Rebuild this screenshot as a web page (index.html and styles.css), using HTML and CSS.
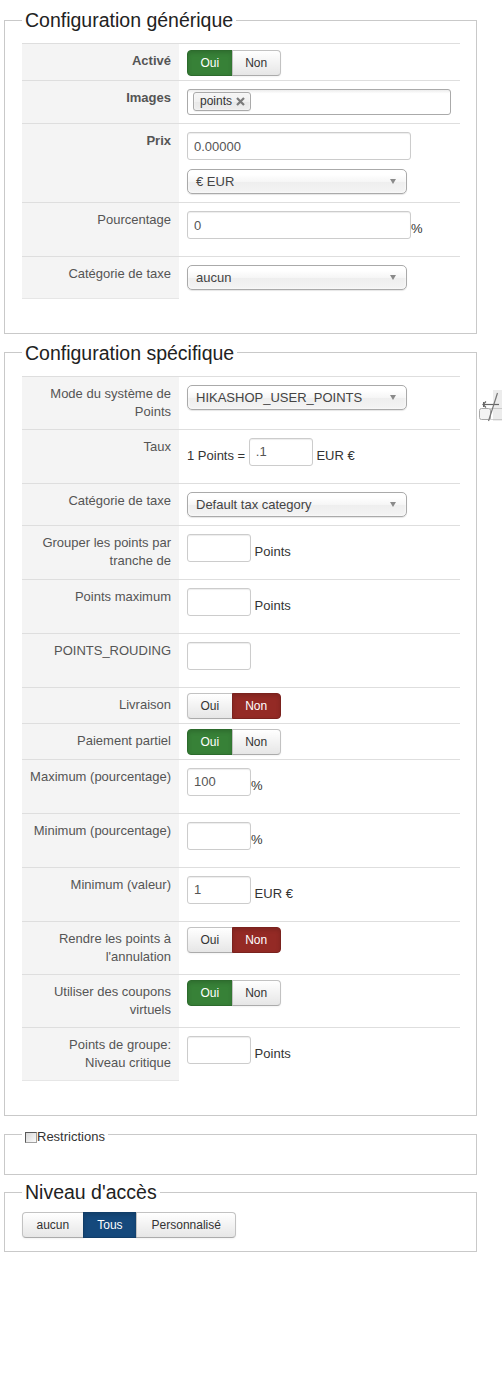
FILE: index.html
```html
<!DOCTYPE html>
<html lang="fr">
<head>
<meta charset="utf-8">
<title>Configuration</title>
<link rel="stylesheet" href="styles.css">
</head>
<body>
<div class="page">

<fieldset class="panel">
  <legend>Configuration générique</legend>
  <table class="form sec1">
    <tr>
      <td class="key strong">Activé</td>
      <td class="val"><div class="toggle"><span class="btn green">Oui</span><span class="btn">Non</span></div></td>
    </tr>
    <tr>
      <td class="key strong">Images</td>
      <td class="val"><div class="multi"><span class="tag">points<svg class="x" width="9" height="9" viewBox="0 0 9 9"><path d="M1 1L8 8M8 1L1 8" stroke="#7a7a7a" stroke-width="2.2"/></svg></span></div></td>
    </tr>
    <tr>
      <td class="key strong">Prix</td>
      <td class="val"><input class="inp" type="text" value="0.00000"><div class="sel">€ EUR</div></td>
    </tr>
    <tr>
      <td class="key">Pourcentage</td>
      <td class="val"><input class="inp" type="text" value="0">%</td>
    </tr>
    <tr class="last">
      <td class="key">Catégorie de taxe</td>
      <td class="val"><div class="sel">aucun</div></td>
    </tr>
  </table>
</fieldset>

<fieldset class="panel">
  <legend>Configuration spécifique</legend>
  <table class="form">
    <tr>
      <td class="key">Mode du système de<br>Points</td>
      <td class="val"><div class="sel">HIKASHOP_USER_POINTS</div></td>
    </tr>
    <tr>
      <td class="key">Taux</td>
      <td class="val">1 Points = <input class="inp sm" type="text" value=".1"> EUR €</td>
    </tr>
    <tr>
      <td class="key">Catégorie de taxe</td>
      <td class="val"><div class="sel">Default tax category</div></td>
    </tr>
    <tr>
      <td class="key">Grouper les points par<br>tranche de</td>
      <td class="val"><input class="inp sm" type="text" value=""> Points</td>
    </tr>
    <tr>
      <td class="key">Points maximum</td>
      <td class="val"><input class="inp sm" type="text" value=""> Points</td>
    </tr>
    <tr>
      <td class="key">POINTS_ROUDING</td>
      <td class="val"><input class="inp sm" type="text" value=""></td>
    </tr>
    <tr>
      <td class="key">Livraison</td>
      <td class="val"><div class="toggle"><span class="btn">Oui</span><span class="btn red">Non</span></div></td>
    </tr>
    <tr>
      <td class="key">Paiement partiel</td>
      <td class="val"><div class="toggle"><span class="btn green">Oui</span><span class="btn">Non</span></div></td>
    </tr>
    <tr>
      <td class="key">Maximum (pourcentage)</td>
      <td class="val"><input class="inp sm" type="text" value="100">%</td>
    </tr>
    <tr>
      <td class="key">Minimum (pourcentage)</td>
      <td class="val"><input class="inp sm" type="text" value="">%</td>
    </tr>
    <tr>
      <td class="key">Minimum (valeur)</td>
      <td class="val"><input class="inp sm" type="text" value="1"> EUR €</td>
    </tr>
    <tr>
      <td class="key">Rendre les points à<br>l'annulation</td>
      <td class="val"><div class="toggle"><span class="btn">Oui</span><span class="btn red">Non</span></div></td>
    </tr>
    <tr>
      <td class="key">Utiliser des coupons<br>virtuels</td>
      <td class="val"><div class="toggle"><span class="btn green">Oui</span><span class="btn">Non</span></div></td>
    </tr>
    <tr class="last">
      <td class="key">Points de groupe:<br>Niveau critique</td>
      <td class="val"><input class="inp sm" type="text" value=""> Points</td>
    </tr>
  </table>
</fieldset>

<fieldset class="panel restr">
  <legend><input class="chk" type="checkbox"><span class="restr-label">Restrictions</span></legend>
</fieldset>

<fieldset class="panel access">
  <legend>Niveau d'accès</legend>
  <div class="toggle group"><span class="btn">aucun</span><span class="btn blue">Tous</span><span class="btn wide">Personnalisé</span></div>
</fieldset>

<svg class="resize-icon" width="24" height="32" viewBox="0 0 24 32">
  <rect x="15" y="0" width="9" height="31" fill="#ececec"/>
  <rect x="1.5" y="18.5" width="11" height="11" rx="2" fill="#f4f4f4" stroke="#a8a8a8"/>
  <rect x="12.5" y="18.5" width="12" height="11" fill="none" stroke="#a8a8a8" stroke-dasharray="1 1"/>
  <path d="M5 14.5H21" stroke="#666" stroke-width="1.2"/>
  <path d="M8 11.5L5 14.5L8 17.5" fill="none" stroke="#666" stroke-width="1.2"/>
  <path d="M5.5 12V17" stroke="#666" stroke-width="1"/>
  <path d="M19.5 3L10.5 31" stroke="#777" stroke-width="1.2"/>
</svg>

</div>
</body>
</html>
```
FILE: styles.css
```css
* {
  box-sizing: border-box;
}

body {
  margin: 0;
  background: #fff;
  font-family: "Liberation Sans", Arial, Helvetica, sans-serif;
  font-size: 13px;
  line-height: 18px;
  color: #333;
}

.page {
  position: relative;
  width: 502px;
  padding: 8px 0 0 4px;
}

.panel {
  width: 473px;
  min-width: 0;
  margin: 0 0 7px 0;
  padding: 11px 16px 34px 17px;
  border: 1px solid #c9c9c9;
}

.panel legend {
  margin: 0;
  padding: 0 3px;
  font-size: 19.5px;
  line-height: 24px;
  color: #222;
}

.form {
  width: 100%;
  border-collapse: collapse;
}

.form td {
  padding: 8px;
  border-top: 1px solid #dedede;
  vertical-align: top;
}

.form .key {
  width: 157px;
  background: #f4f4f4;
  color: #555;
  text-align: right;
  white-space: nowrap;
}

.form .key.strong {
  font-weight: bold;
}

.form tr.last .key {
  border-bottom: 1px solid #e6e6e6;
}

.val {
  color: #333;
}

/* text inputs */
.inp {
  width: 224px;
  height: 28px;
  margin: 0 0 9px 0;
  padding: 4px 6px;
  border: 1px solid #ccc;
  border-radius: 3px;
  background: #fff;
  box-shadow: inset 0 1px 1px rgba(0, 0, 0, 0.075);
  font: inherit;
  color: #555;
  vertical-align: 3px;
}

.inp.sm {
  width: 64px;
}

/* select-like dropdown */
.sel {
  position: relative;
  width: 220px;
  height: 25px;
  padding: 0 0 0 8px;
  border: 1px solid #aaa;
  border-radius: 5px;
  background: linear-gradient(#fff 20%, #f6f6f6 50%, #eee 52%, #f4f4f4 100%);
  box-shadow: inset 0 0 3px #fff, 0 1px 1px rgba(0, 0, 0, 0.1);
  line-height: 24px;
  color: #444;
}

.sel::after {
  content: "";
  position: absolute;
  right: 10px;
  top: 9px;
  border-left: 3.5px solid transparent;
  border-right: 3.5px solid transparent;
  border-top: 5px solid #8a8a8a;
}

/* multi select (tags) */
.multi {
  width: 264px;
  height: 26px;
  padding: 2px 5px;
  border: 1px solid #aaa;
  border-radius: 3px;
  background: linear-gradient(#eee 1%, #fff 15%);
}

.tag {
  display: inline-flex;
  align-items: center;
  gap: 4px;
  height: 19px;
  padding: 0 5px 0 6px;
  border: 1px solid #aaa;
  border-radius: 3px;
  background: linear-gradient(#f4f4f4 20%, #f0f0f0 50%, #e8e8e8 52%, #eee 100%);
  box-shadow: inset 0 0 2px #fff, 0 1px 0 rgba(0, 0, 0, 0.05);
  font-size: 12px;
  line-height: 17px;
  color: #333;
}

.tag .x {
  display: block;
}

/* button groups */
.toggle {
  display: flex;
  width: max-content;
  height: 26px;
  margin: -3px 0 -4px 0;
}

.sec1 .toggle {
  margin: -2px 0 -4px 0;
}

.btn {
  padding: 0 12.5px;
  border: 1px solid #c2c2c2;
  border-bottom-color: #ababab;
  background: linear-gradient(#fff, #e6e6e6);
  box-shadow: inset 0 1px 0 rgba(255, 255, 255, 0.2), 0 1px 2px rgba(0, 0, 0, 0.05);
  font-size: 12px;
  line-height: 24px;
  color: #333;
}

.btn + .btn {
  margin-left: -1px;
}

.btn:first-child {
  border-radius: 4px 0 0 4px;
}

.btn:last-child {
  border-radius: 0 4px 4px 0;
}

.btn.green {
  background: #378137;
  border-color: #2d6b2d;
  color: #fff;
  box-shadow: inset 0 2px 4px rgba(0, 0, 0, 0.15);
}

.btn.red {
  background: #942a25;
  border-color: #7a221e;
  color: #fff;
  box-shadow: inset 0 2px 4px rgba(0, 0, 0, 0.15);
}

.btn.blue {
  background: #15497c;
  border-color: #113d68;
  color: #fff;
  box-shadow: inset 0 2px 4px rgba(0, 0, 0, 0.15);
}

/* restrictions fieldset */
.restr {
  margin-top: -1px;
  margin-bottom: 5px;
  padding-top: 11px;
  padding-bottom: 17px;
}

.chk {
  appearance: none;
  -webkit-appearance: none;
  width: 12px;
  height: 11px;
  margin: 0;
  border: 1px solid #a0a0a0;
  border-top-color: #5a5a5a;
  border-left-color: #5a5a5a;
  background: linear-gradient(135deg, #d8d8d8, #fbfbfb);
  vertical-align: -2px;
}

.restr-label {
  font-size: 13px;
  line-height: 18px;
  color: #333;
}

/* access level fieldset */
.access {
  padding-top: 8px;
  padding-bottom: 13px;
}

.access .toggle {
  margin: 0;
}

.access .btn {
  padding: 0 13.5px;
}

.access .btn.wide {
  padding: 0 14.5px;
}

.resize-icon {
  position: absolute;
  left: 478px;
  top: 390px;
}
```
